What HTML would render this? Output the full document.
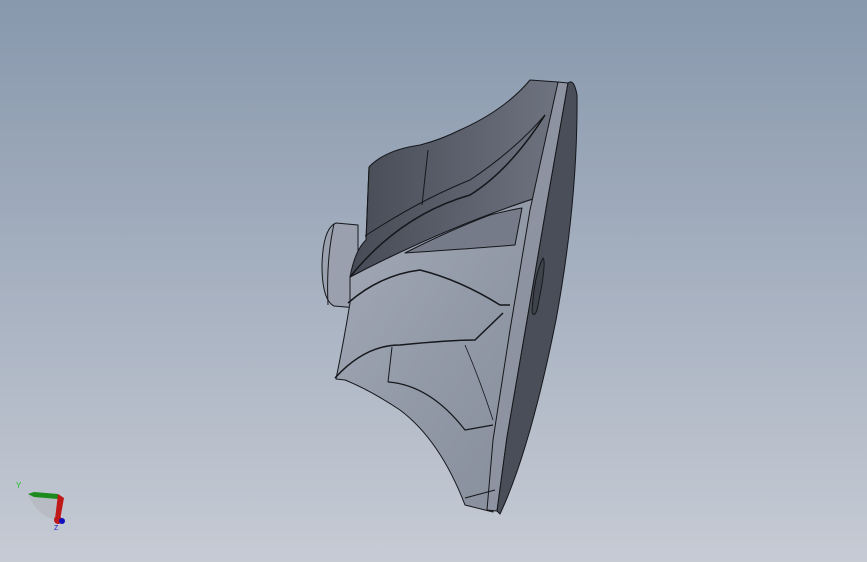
<!DOCTYPE html>
<html><head><style>
html,body{margin:0;padding:0;}
body{width:867px;height:562px;overflow:hidden;background:linear-gradient(180deg,#8898ad 0%,#a3aebe 45%,#c6cbd4 100%);}
svg{position:absolute;left:0;top:0;}
</style></head><body>
<svg width="867" height="562" viewBox="0 0 867 562" xmlns="http://www.w3.org/2000/svg">
<defs>
<linearGradient id="dk" x1="0" y1="0" x2="1" y2="0">
<stop offset="0" stop-color="#474b55"/><stop offset="0.6" stop-color="#5e636f"/><stop offset="1" stop-color="#6e7380"/>
</linearGradient>
<linearGradient id="lt" x1="0" y1="0" x2="1" y2="1">
<stop offset="0" stop-color="#a4aab8"/><stop offset="0.5" stop-color="#9299a7"/><stop offset="1" stop-color="#858c9a"/>
</linearGradient>
</defs>
<g stroke="#15171b" stroke-width="1" stroke-linejoin="round">
<path d="M336 223 L358 225 L358 308 L334 306 Q322 300 322 265 Q323 228 336 223 Z" fill="#9aa0ad"/>
<path d="M334 224 Q326 260 328 305" fill="none"/>
<path d="M350 277 Q450 225 545 195 L536 260 L520 330 L505 420 L493 512 L465 505 Q440 440 400 410 Q370 390 345 380 L336 379 Q344 340 350 303 Z" fill="url(#lt)"/>
<path d="M369 167 Q385 150 420 145 Q440 140 460 130 Q505 110 530 80 L558 82 L552 130 L545 195 Q450 225 350 277 Q355 250 366 240 Z" fill="url(#dk)"/>
<path d="M558 82 L568 83 L547 203 L530 303 L507 437 L497 511 L487 510 L493 440 L510 330 L530 210 Z" fill="#8d93a0"/>
<path d="M568 83 Q574 78 577 95 Q578 200 556 320 Q530 450 500 514 L497 511 L507 437 L530 303 L547 203 Z" fill="#4a4e58"/>
<path d="M543 258 Q547 262 537 310 Q534 318 532 312 Q534 275 543 258 Z" fill="#3e424b"/>
<path d="M369 167 L366 240" fill="none"/>
<path d="M428 150 L422 205" fill="none"/>
<path d="M350 277 Q400 215 470 195 Q510 170 545 115" fill="none" stroke-width="1.5"/>
<path d="M365 236 Q420 200 470 180 Q515 150 545 115" fill="none"/>
<path d="M405 253 Q450 230 490 215 Q510 210 522 208 L515 245 Q480 248 405 253 Z" fill="#757b89"/>
<path d="M348 303 Q380 275 420 270 Q460 280 500 305 L510 305" fill="none" stroke-width="1.5"/>
<path d="M335 378 Q365 345 400 345 Q450 340 475 340 L503 313" fill="none" stroke-width="1.5"/>
<path d="M388 382 Q430 385 465 430 L493 425" fill="none" stroke-width="1.2"/>
<path d="M392 347 L388 382" fill="none"/>
<path d="M465 498 L495 490" fill="none"/>
<path d="M465 345 Q480 380 493 420" fill="none" stroke-width="0.8"/>
</g>
<g>
<path d="M28 495 L58 498 L60 520 Q40 520 28 495 Z" fill="#b5b8bf" opacity="0.8"/>
<path d="M34 492 L58 494 L58 499 L34 497 L28 494 Z" fill="#1c8a1c"/>
<path d="M58 494 L64 498 L60 520 L55 519 Z" fill="#c01818"/>
<circle cx="58" cy="520" r="4" fill="#c01818"/>
<circle cx="62" cy="521" r="3" fill="#1010c0"/>
<text x="16" y="488" font-family="Liberation Sans,sans-serif" font-size="8" fill="#20c020">Y</text>
<text x="54" y="530" font-family="Liberation Sans,sans-serif" font-size="7" fill="#2020d0">Z</text>
</g>
</svg>
</body></html>
